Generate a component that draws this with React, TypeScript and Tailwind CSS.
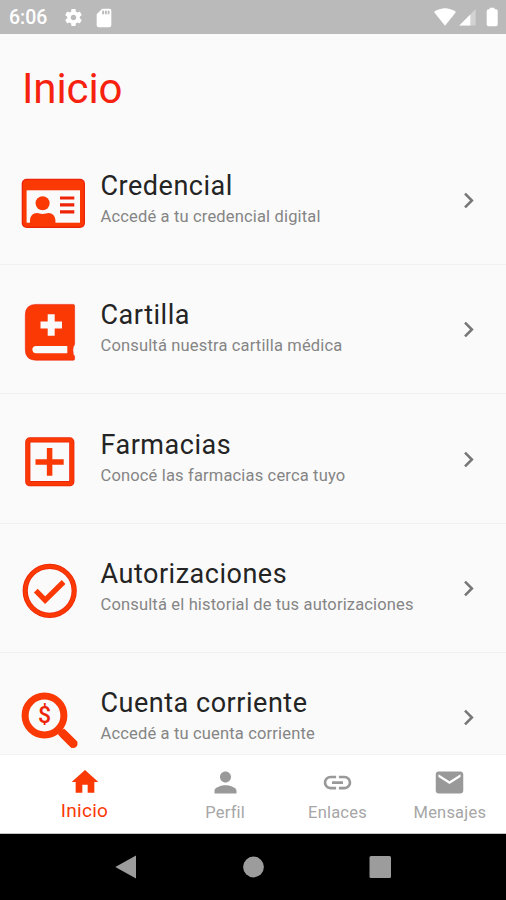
import type { ReactNode } from "react";

const RED = "#fa3905";
const DEEP = "#ee2408";

const CredentialIcon = () => (
  <svg className="size-[68px] shrink-0" viewBox="20 169 68 68">
    <rect x="21.7" y="178.8" width="63.3" height="49.2" rx="5" fill={DEEP} />
    <rect x="23" y="180.1" width="60.7" height="46.6" rx="4" fill={RED} />
    <rect x="26.6" y="190.3" width="53.4" height="32.4" fill="#fafafa" />
    <circle cx="42.6" cy="203.3" r="7" fill={RED} />
    <path d="M30 223v-2.500c0-4.500 3-7.500 7-7.500 2 0 3 1 5.700 1s3.700-1 5.700-1c4 0 7 3 7 7.500v2.500z" fill={RED} />
    <path d="M60 198h14.300M60 204.900h14.300M60 211.900h14.300" stroke={DEEP} strokeWidth="3.200" />
  </svg>
);

const BookIcon = () => (
  <svg className="size-[68px] shrink-0" viewBox="20 298.500 68 68">
    <path
      d="M36 304.900H73.300Q74.600 304.900 74.600 306.400V343.900Q74.600 345.900 73.300 346.900Q72.300 350.400 73.300 354.900Q74.600 355.900 74.600 357.400V359.200Q74.600 360.700 73.300 360.700H36Q25.300 360.700 25.300 350V315.600Q25.300 304.900 36 304.900Z"
      fill={RED}
      stroke={DEEP}
      strokeWidth="0.600"
    />
    <path d="M47.700 314.700h7v7.200h7.300v7h-7.300v7.300h-7v-7.300h-7.200v-7h7.200z" fill="#fafafa" />
    <path d="M36 346.500H67.300V353.700H36a3.600 3.600 0 0 1 0-7.200z" fill="#fafafa" />
  </svg>
);

const PharmacyIcon = () => (
  <svg className="size-[68px] shrink-0" viewBox="20 428 68 68" fill="none" stroke={RED}>
    <rect x="27.800" y="439.900" width="44" height="43.800" rx="2" strokeWidth="5.200" stroke={DEEP} />
    <rect x="27.800" y="439.900" width="44" height="43.800" rx="2" strokeWidth="3.600" />
    <path d="M49.600 448v27.800M35.500 462h28.200" strokeWidth="5.500" />
  </svg>
);

const CheckIcon = () => (
  <svg className="size-[68px] shrink-0" viewBox="20 557.500 68 68" fill="none" stroke={RED}>
    <circle cx="49.700" cy="591.300" r="24.500" strokeWidth="5.200" stroke={DEEP} />
    <circle cx="49.700" cy="591.300" r="24.500" strokeWidth="3.800" />
    <path d="M35.800 591.200l9.300 9.500 18.500-18.200" strokeWidth="5.300" />
  </svg>
);

const AccountIcon = () => (
  <svg className="size-[68px] shrink-0" viewBox="20 687 68 68">
    <circle cx="44.500" cy="715.500" r="19.400" fill="none" stroke={RED} strokeWidth="7" />
    <path d="M58.500 729.500l4.500 4.500" stroke={RED} strokeWidth="6" />
    <path d="M61 731.500L74.500 745" stroke={RED} strokeWidth="8.500" />
    <path d="M64 734.500L73.300 743.800" stroke={RED} strokeWidth="8.500" strokeLinecap="round" />
    <text x="44.600" y="723.300" textAnchor="middle" fontSize="23" className="font-['Roboto',sans-serif] font-medium" fill={DEEP}>
      $
    </text>
  </svg>
);

type Item = { title: string; sub: string; icon: ReactNode };

const items: Item[] = [
  { title: "Credencial", sub: "Accedé a tu credencial digital", icon: <CredentialIcon /> },
  { title: "Cartilla", sub: "Consultá nuestra cartilla médica", icon: <BookIcon /> },
  { title: "Farmacias", sub: "Conocé las farmacias cerca tuyo", icon: <PharmacyIcon /> },
  { title: "Autorizaciones", sub: "Consultá el historial de tus autorizaciones", icon: <CheckIcon /> },
  { title: "Cuenta corriente", sub: "Accedé a tu cuenta corriente", icon: <AccountIcon /> },
];

const Row = ({ item }: { item: Item }) => (
  <li className="flex h-[129.4px] shrink-0 items-start border-b border-[#f0f0f0] pl-5">
    <div className="pt-[33.500px]">{item.icon}</div>
    <div className="flex-1 pt-[34.400px] pl-[12.500px]">
      <h2 className="text-[27px] leading-[32px] font-normal tracking-[0.52px] whitespace-nowrap text-[#242424]">{item.title}</h2>
      <p className="mt-[5px] text-[16.500px] leading-[20px] font-normal tracking-[0.160px] whitespace-nowrap text-[#858585]">{item.sub}</p>
    </div>
    <svg className="mt-[49.300px] mr-[22px] size-[31px]" viewBox="0 0 24 24" fill="#777">
      <path d="M10 6L8.590 7.410 13.170 12l-4.580 4.590L10 18l6-6z" />
    </svg>
  </li>
);

const tabs = [
  { label: "Perfil", d: "M12 12c2.210 0 4-1.790 4-4s-1.790-4-4-4-4 1.790-4 4 1.790 4 4 4zm0 2c-2.670 0-8 1.340-8 4v2h16v-2c0-2.660-5.330-4-8-4z" },
  { label: "Enlaces", d: "M3.900 12c0-1.710 1.390-3.100 3.100-3.100h4V7H7c-2.760 0-5 2.240-5 5s2.240 5 5 5h4v-1.900H7c-1.710 0-3.100-1.390-3.100-3.100zM8 13h8v-2H8v2zm9-6h-4v1.900h4c1.710 0 3.100 1.390 3.100 3.100s-1.390 3.100-3.100 3.100h-4V17h4c2.760 0 5-2.240 5-5s-2.240-5-5-5z" },
  { label: "Mensajes", d: "M20 4H4c-1.100 0-1.990.9-1.990 2L2 18c0 1.100.9 2 2 2h16c1.100 0 2-.9 2-2V6c0-1.100-.9-2-2-2zm0 4l-8 5-8-5V6l8 5 8-5v2z" },
];

export default function App() {
  return (
    <div className="flex h-[900px] w-[506px] flex-col overflow-hidden bg-[#fafafa] font-['Roboto',sans-serif]">
      <header className="flex h-[34px] shrink-0 items-center bg-[#bababa] pl-[9px] text-white">
        <span className="w-[54px] pt-[2px] text-[19.500px] leading-6 font-medium">6:06</span>
        <svg className="size-[21px]" viewBox="0 0 24 24" fill="currentColor">
          <path d="M19.140 12.940c.04-.3.060-.61.060-.94 0-.32-.02-.64-.07-.94l2.030-1.580c.18-.14.230-.41.120-.61l-1.920-3.320c-.12-.22-.37-.29-.59-.22l-2.390.96c-.5-.38-1.030-.7-1.620-.94l-.36-2.540c-.04-.24-.24-.41-.48-.41h-3.840c-.24 0-.43.17-.47.41l-.36 2.540c-.59.24-1.130.57-1.620.94l-2.390-.96c-.22-.08-.47 0-.59.22L2.740 8.870c-.12.21-.08.470.12.610l2.030 1.580c-.05.3-.09.630-.09.940s.02.640.07.940l-2.030 1.580c-.18.14-.23.41-.12.61l1.920 3.320c.12.220.37.290.59.220l2.390-.96c.5.380 1.030.7 1.620.94l.36 2.540c.05.240.24.410.48.410h3.840c.24 0 .44-.17.470-.41l.36-2.540c.59-.24 1.130-.56 1.620-.94l2.390.96c.22.080.47 0 .59-.22l1.920-3.320c.12-.22.070-.47-.12-.61l-2.010-1.580zM12 15.200c-1.770 0-3.200-1.430-3.200-3.200s1.430-3.200 3.200-3.200 3.200 1.430 3.200 3.200-1.430 3.200-3.200 3.200z" />
        </svg>
        <svg className="ml-[9px] mt-px size-[22px]" viewBox="0 0 24 24" fill="currentColor">
          <path d="M18 2h-8L4.020 8 4 20c0 1.100.9 2 2 2h12c1.100 0 2-.9 2-2V4c0-1.100-.9-2-2-2zm-6 6h-2V4h2v4zm3 0h-2V4h2v4zm3 0h-2V4h2v4z" />
        </svg>
        <svg className="ml-auto h-[34px] w-[76px]" viewBox="430 0 76 34" fill="currentColor">
          <path d="M434 12Q445 4.500 456 12L445 25.800z" />
          <path d="M459.300 25.500L475.700 9V25.500z" opacity=".35" />
          <path d="M459.300 25.500L470.300 14.500V25.500z" />
          <path d="M489.700 7.700h4.800v1.600h1.500q1.700 0 1.700 1.700v13.500q0 1.700-1.700 1.700h-7.600q-1.700 0-1.700-1.700v-13.500q0-1.700 1.700-1.700h1.300z" />
        </svg>
      </header>

      <main className="flex min-h-0 flex-1 flex-col overflow-hidden">
        <h1 className="h-[101.500px] shrink-0 pt-[29.500px] pl-[22px] text-[42px] leading-[50px] font-normal tracking-[-0.1px] text-[#f6210f]">Inicio</h1>
        <ul className="flex flex-col">
          {items.map((item) => (
            <Row key={item.title} item={item} />
          ))}
        </ul>
      </main>

      <nav className="flex h-[80px] shrink-0 border-t border-b border-t-[#f3f3f3] border-b-[#c4c4c4] bg-white">
        <a className="flex w-[169px] flex-col items-center pt-[11px] text-[#fa3905]">
          <svg className="size-[32px]" viewBox="0 0 24 24" fill="currentColor">
            <path d="M10 20v-6h4v6h5v-8h3L12 3 2 12h3v8z" />
          </svg>
          <span className="mt-[2px] text-[19px] leading-[22px] font-normal tracking-[0.3px]">Inicio</span>
        </a>
        {tabs.map((tab) => (
          <a key={tab.label} className="flex flex-1 flex-col items-center pt-[11px] text-[#999]">
            <svg className="size-[33px]" viewBox="0 0 24 24" fill="currentColor">
              <path d={tab.d} />
            </svg>
            <span className="mt-[4px] text-[16.500px] leading-[20px] font-normal tracking-[0.2px] text-[#a6a6a6]">{tab.label}</span>
          </a>
        ))}
      </nav>

      <footer className="h-[66.500px] shrink-0 bg-black">
        <svg className="h-[66.500px] w-[506px]" viewBox="0 833.500 506 66.500" fill="#9c9c9c">
          <path d="M136 855V878L115.300 866.500z" />
          <circle cx="253.500" cy="866.500" r="10.400" />
          <rect x="369.500" y="855.500" width="21.500" height="22" rx="1.500" />
        </svg>
      </footer>
    </div>
  );
}
